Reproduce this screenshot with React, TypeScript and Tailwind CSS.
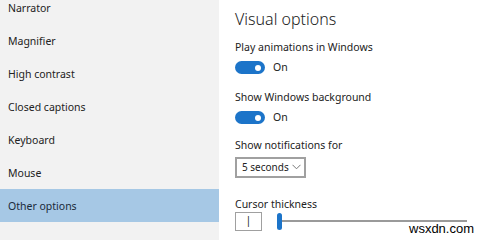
import React from 'react';

const navItems = ['Narrator', 'Magnifier', 'High contrast', 'Closed captions', 'Keyboard', 'Mouse', 'Other options'];

function Toggle() {
    return (
        <div className="flex items-center gap-[8px]">
            <div className="w-[30px] h-[13px] rounded-full bg-[#1c74c9] flex items-center justify-end pr-[4px]">
                <div className="w-[6px] h-[6px] rounded-full bg-white"></div>
            </div>
            <span className="text-[10.5px] text-[#222]">On</span>
        </div>
    );
}

export default function App() {
    return (
        <div
            className="relative w-[480px] h-[240px] flex overflow-hidden bg-white"
            style={{ fontFamily: '"Noto Sans", "Open Sans", sans-serif' }}
        >
            {/* Nav */}
            <div className="w-[219px] h-[249px] bg-[#f2f2f2] flex flex-col -mt-[9px]">
                {navItems.map((item) => (
                    <div
                        key={item}
                        className={`h-[33px] shrink-0 flex items-center pl-[8px] pt-[2px] text-[10.5px] ${item === 'Other options' ? 'bg-[#a6c8e5] text-[#1a2a3a]' : 'text-[#222]'}`}
                    >
                        {item}
                    </div>
                ))}
            </div>

            {/* Content */}
            <div className="flex-1 flex flex-col pl-[16px] pt-[8px]">
                <h2 className="text-[16px] font-light text-[#222] leading-[22px]">Visual options</h2>

                <div className="mt-[10px] text-[10.5px] text-[#222] leading-[14px]">Play animations in Windows</div>
                <div className="mt-[6px]"><Toggle /></div>

                <div className="mt-[14px] text-[10.5px] text-[#222] leading-[14px]">Show Windows background</div>
                <div className="mt-[6px]"><Toggle /></div>

                <div className="mt-[12px] text-[10.5px] text-[#222] leading-[14px]">Show notifications for</div>
                <div className="mt-[5px] w-[71px] h-[21px] border-2 border-[#a0a0a0] flex items-center justify-between pl-[5px] pr-[3px]">
                    <span className="text-[10px] text-[#222] whitespace-nowrap leading-[14px]">5 seconds</span>
                    <svg width="9" height="6" viewBox="0 0 9 6" fill="none" stroke="#777" strokeWidth="1" className="shrink-0">
                        <path d="M0.5 0.8 L4.5 4.8 L8.5 0.8" />
                    </svg>
                </div>

                <div className="mt-[19px] text-[10.5px] text-[#222] leading-[14px]">Cursor thickness</div>
                <div className="mt-[1px] flex items-center">
                    <div className="w-[27px] h-[19px] border border-[#a0a0a0] flex items-center justify-center text-[10.5px] text-[#222]">|</div>
                    <div className="flex-1 flex items-center ml-[15px] mr-[13px]">
                        <div className="w-[5px] h-[17px] rounded-full bg-[#1c74c9] shrink-0"></div>
                        <div className="flex-1 h-[2px] bg-[#9a9a9a]"></div>
                    </div>
                </div>
            </div>

            {/* Watermark */}
            <div
                className="absolute left-[409px] top-[221px] text-[13px] text-black leading-[16px]"
                style={{ fontFamily: '"Liberation Sans", Arial, sans-serif' }}
            >
                wsxdn.com
            </div>
        </div>
    );
}
